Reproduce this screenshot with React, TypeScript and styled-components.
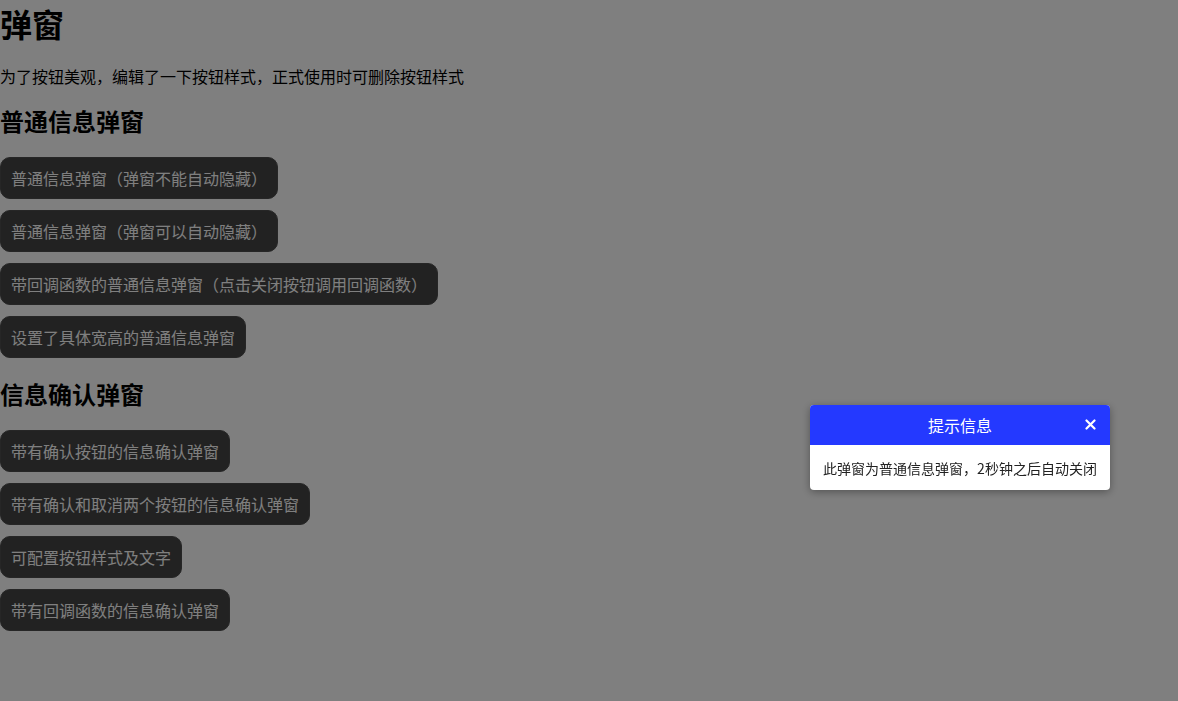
import styled, { createGlobalStyle } from "styled-components";

const GlobalStyle = createGlobalStyle`
  body {
    margin: 0;
    background: #fff;
    font-family: "Noto Sans CJK SC", "Noto Sans", sans-serif;
    color: #000;
  }
`;

const normalButtons = [
  "普通信息弹窗（弹窗不能自动隐藏）",
  "普通信息弹窗（弹窗可以自动隐藏）",
  "带回调函数的普通信息弹窗（点击关闭按钮调用回调函数）",
  "设置了具体宽高的普通信息弹窗",
];

const confirmButtons = [
  "带有确认按钮的信息确认弹窗",
  "带有确认和取消两个按钮的信息确认弹窗",
  "可配置按钮样式及文字",
  "带有回调函数的信息确认弹窗",
];

const App = () => {
  return (
    <>
      <GlobalStyle />
      <Page>
        <Title>弹窗</Title>
        <Tip>为了按钮美观，编辑了一下按钮样式，正式使用时可删除按钮样式</Tip>

        <SectionTitle>普通信息弹窗</SectionTitle>
        <ButtonList>
          {normalButtons.map((text) => (
            <DemoButton key={text}>{text}</DemoButton>
          ))}
        </ButtonList>

        <SectionTitle top={22}>信息确认弹窗</SectionTitle>
        <ButtonList>
          {confirmButtons.map((text) => (
            <DemoButton key={text}>{text}</DemoButton>
          ))}
        </ButtonList>
      </Page>

      <Mask />
      <Dialog>
        <DialogHeader>
          <DialogTitle>提示信息</DialogTitle>
          <CloseBtn aria-label="close">
            <svg width="11" height="11" viewBox="0 0 11 11">
              <path
                d="M1.5 1.5 L9.5 9.5 M9.5 1.5 L1.5 9.5"
                stroke="#fff"
                strokeWidth="2.2"
                strokeLinecap="round"
              />
            </svg>
          </CloseBtn>
        </DialogHeader>
        <DialogBody>此弹窗为普通信息弹窗，2秒钟之后自动关闭</DialogBody>
      </Dialog>
    </>
  );
};

const Page = styled.div`
  display: flex;
  flex-direction: column;
  align-items: flex-start;
`;

const Title = styled.h1`
  margin: 0;
  font-size: 32px;
  line-height: 46px;
  font-weight: 700;
`;

const Tip = styled.p`
  margin: 19px 0 0;
  font-size: 16px;
  line-height: 22px;
`;

const SectionTitle = styled.h2<{ top?: number }>`
  margin: ${(props) => (props.top ?? 20) - 2}px 0 20px;
  font-size: 24px;
  line-height: 32px;
  font-weight: 700;
`;

const ButtonList = styled.div`
  display: flex;
  flex-direction: column;
  align-items: flex-start;
  gap: 11px;
`;

const DemoButton = styled.button`
  height: 42px;
  padding: 0 10px;
  border: 1px solid #4c4c4c;
  border-radius: 10px;
  background: #444;
  color: #fff;
  font-family: inherit;
  font-size: 16px;
  cursor: pointer;
`;

const Mask = styled.div`
  position: fixed;
  inset: 0;
  background: rgba(0, 0, 0, 0.5);
`;

const Dialog = styled.div`
  position: fixed;
  top: 405px;
  left: 810px;
  width: 300px;
  border-radius: 4px;
  overflow: hidden;
  background: #fff;
  box-shadow: 0 2px 8px rgba(0, 0, 0, 0.35);
`;

const DialogHeader = styled.div`
  position: relative;
  display: flex;
  align-items: center;
  justify-content: center;
  height: 40px;
  background: #2439ff;
`;

const DialogTitle = styled.div`
  color: #fff;
  font-size: 16px;
`;

const CloseBtn = styled.button`
  position: absolute;
  right: 14px;
  top: 14px;
  display: flex;
  padding: 0;
  border: none;
  background: none;
  cursor: pointer;
`;

const DialogBody = styled.div`
  height: 45px;
  display: flex;
  align-items: center;
  justify-content: center;
  color: #222;
  font-size: 14px;
`;

export default App;
